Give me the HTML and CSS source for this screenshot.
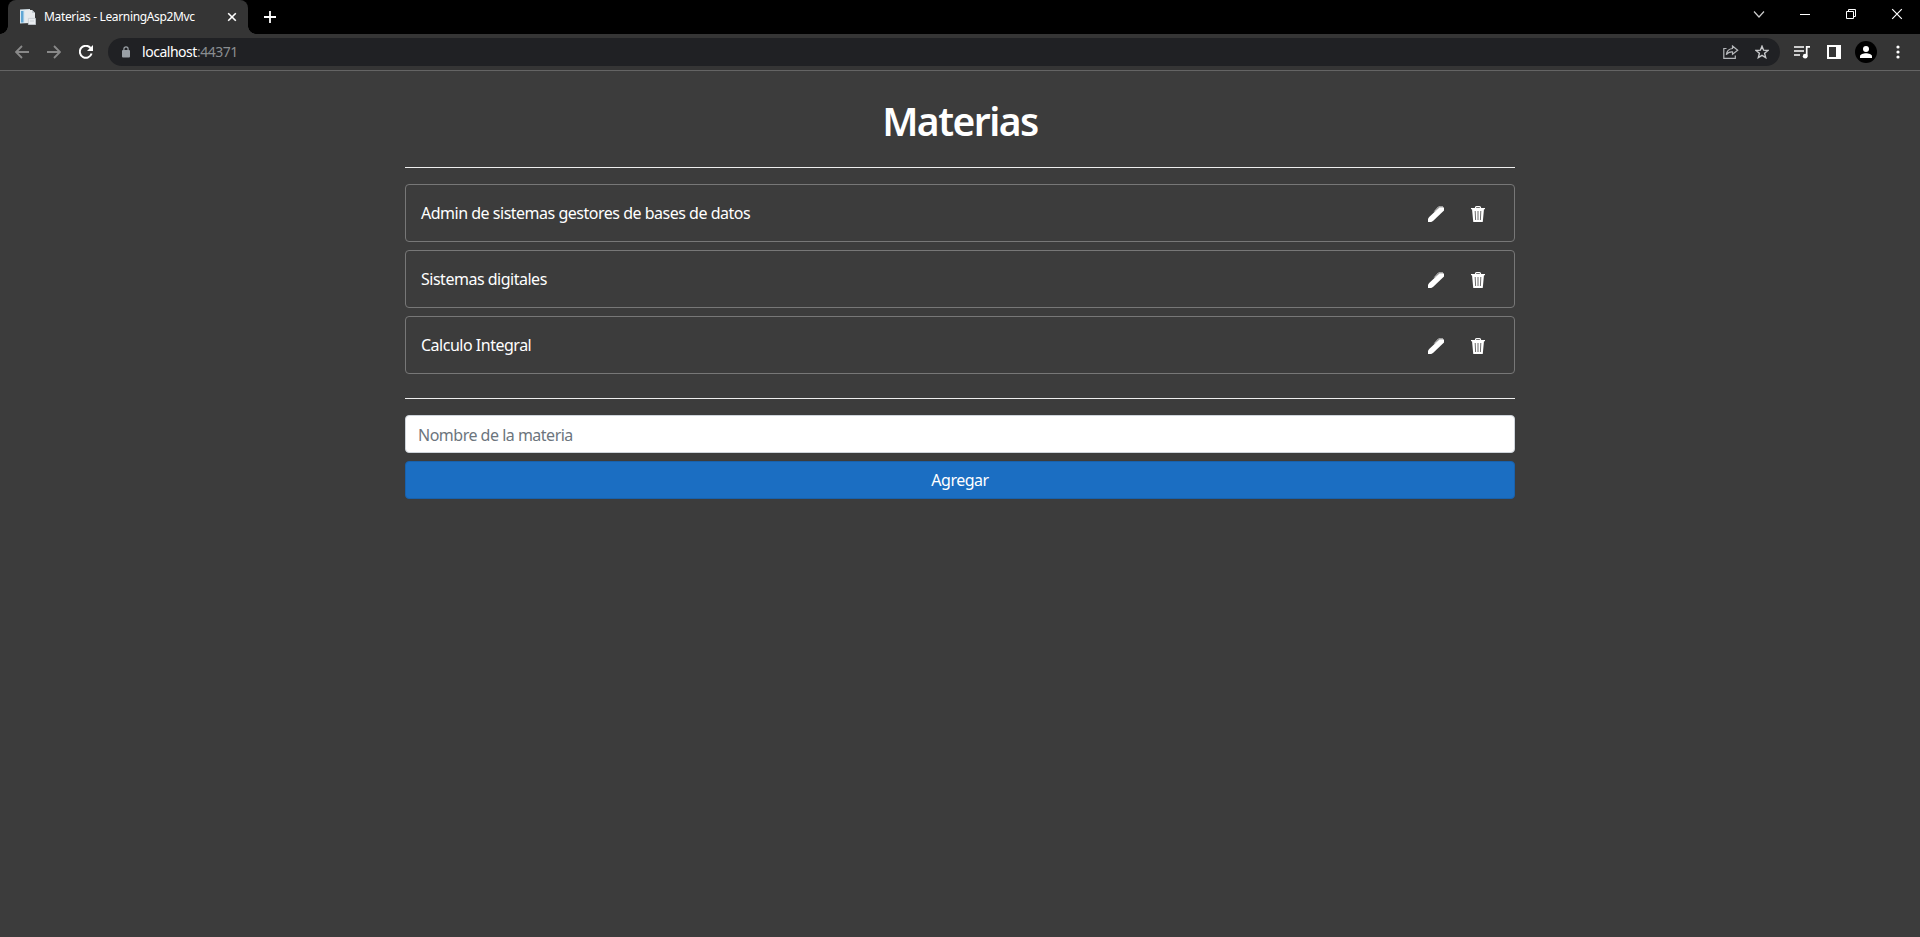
FILE: index.html
```html
<!DOCTYPE html>
<html lang="es">
<head>
<meta charset="utf-8">
<title>Materias - LearningAsp2Mvc</title>
<link rel="stylesheet" href="styles.css">
</head>
<body>
<svg width="0" height="0" class="defs">
  <symbol id="pencil" viewBox="0 0 16 16"><path fill="#fff" d="M0 16V12.700L1.200 11 11.500 1.300H15.500L16 2V4.500L5 15 3.200 16z"/><path d="M6.300 5.500 10.500.9H15" fill="none" stroke="#ddd" stroke-width="1"/></symbol>
  <symbol id="trash" viewBox="0 0 14 16"><path d="M4.500 2.500V1.500Q4.500.6 5.500.6H8.500Q9.500.6 9.500 1.500V2.500M0 2.700H14" fill="none" stroke="#fff" stroke-width="1.200"/><path fill="#fff" d="M1 3H13L11.800 15.500Q11.700 16 11.200 16H2.800Q2.300 16 2.200 15.500z"/><path d="M4.200 5 4.600 14M7 5V14M9.800 5 9.400 14" stroke="#6a6a6a" stroke-width="1"/></symbol>
</svg>
<header class="browser">
  <div class="tabstrip">
    <div class="tab">
      <svg class="favicon" width="16" height="16" viewBox="0 0 16 16"><path fill="#d8e6ef" d="M0 .5 10 0V14L0 14.500z"/><path fill="#5fa6d4" d="M1 2H3.500V13.500H1z"/><path fill="#e6eaed" d="M5 1H12L15 4V14H5z"/><path fill="#c1c9cf" d="M12 1V4H15z"/><path fill="#e9edf0" stroke="#c5cbd0" stroke-width=".8" d="M8.400 9.400H15.600V15.600H8.400z"/><path d="M10 12H14" stroke="#cbd0d5"/></svg>
      <span class="tab-title">Materias - LearningAsp2Mvc</span>
      <svg class="tab-close" width="10" height="10" viewBox="0 0 10 10"><path d="M1.200 1.200 8.800 8.800M8.800 1.200 1.200 8.800" stroke="#fff" stroke-width="1.600"/></svg>
    </div>
    <svg class="new-tab" width="12" height="12" viewBox="0 0 12 12"><path d="M6 0V12M0 6H12" stroke="#fff" stroke-width="1.800"/></svg>
    <div class="window-controls">
      <svg width="46" height="28" viewBox="0 0 46 28"><path d="M18 11.500 23 17 28 11.500" fill="none" stroke="#ccc" stroke-width="1.200"/></svg>
      <svg width="46" height="28" viewBox="0 0 46 28"><path d="M18 14.500H28" stroke="#fff"/></svg>
      <svg width="46" height="28" viewBox="0 0 46 28"><path d="M18.500 11.500H25.500V18.500H18.500zM20.500 11.500V9.500H27.500V16.500H25.500" fill="none" stroke="#fff"/></svg>
      <svg width="46" height="28" viewBox="0 0 46 28"><path d="M18.200 9.200 27.800 18.800M27.800 9.200 18.200 18.800" stroke="#fff" stroke-width="1.200"/></svg>
    </div>
  </div>
  <div class="toolbar">
    <div class="nav">
      <svg width="14" height="14" viewBox="0 0 14 14"><path d="M14 7H1.500M7 1 1 7 7 13" fill="none" stroke="#898989" stroke-width="1.800"/></svg>
      <svg width="14" height="14" viewBox="0 0 14 14"><path d="M0 7H12.500M7 1 13 7 7 13" fill="none" stroke="#898989" stroke-width="1.800"/></svg>
      <svg width="14" height="14" viewBox="0 0 14 14"><path d="M12.600 8.500A6 6 0 1 1 11.500 3" fill="none" stroke="#fff" stroke-width="2"/><path fill="#fff" d="M14 0V6H8z"/></svg>
    </div>
    <div class="address">
      <svg class="lock" width="8" height="12" viewBox="0 0 8 12"><rect y="4" width="8" height="7.500" rx="1" fill="#9aa0a6"/><path d="M1.900 4.500V3A2.100 2.100 0 0 1 6.100 3V4.500" fill="none" stroke="#9aa0a6" stroke-width="1.200"/></svg>
      <span class="url">localhost<span class="port">:44371</span></span>
      <svg class="share" width="16" height="14" viewBox="0 0 16 14"><path d="M3.500 3.500H.8V13.300H12.300V10.500" fill="none" stroke="#b5b7ba" stroke-width="1.200"/><path d="M9.500 1 14.700 5.200 9.500 9.300V6.900Q5.500 6.500 3.300 9.700 3.900 4.200 9.500 3.500z" fill="none" stroke="#b5b7ba" stroke-width="1.200"/></svg>
      <svg class="star" width="14" height="14" viewBox="0 0 14 14"><path d="M7 1.200 8.600 5.200 13 5.500 9.600 8.300 10.700 12.600 7 10.300 3.300 12.600 4.400 8.300 1 5.500 5.400 5.200z" fill="none" stroke="#c8c9cb" stroke-width="1.400"/></svg>
    </div>
    <svg class="media" width="16" height="14" viewBox="0 0 16 14"><path d="M0 2H10M0 6H10M0 10H6" stroke="#fff" stroke-width="1.600"/><path d="M12.700 11V1.800H16" fill="none" stroke="#fff" stroke-width="1.700"/><circle cx="11.200" cy="11.200" r="2.400" fill="#fff"/></svg>
    <svg class="panel" width="14" height="14" viewBox="0 0 14 14"><path fill="#fff" fill-rule="evenodd" d="M0 0H14V14H0zM2 2V12H9V2z"/></svg>
    <svg class="profile" width="22" height="22" viewBox="0 0 22 22"><circle cx="11" cy="11" r="11"/><circle cx="11" cy="8" r="3" fill="#fff"/><path fill="#fff" d="M5 17V15.200C5 13.200 8.500 12.200 11 12.200S17 13.200 17 15.200V17z"/></svg>
    <svg class="dots" width="4" height="14" viewBox="0 0 4 14" fill="#fff"><circle cx="2" cy="2" r="1.600"/><circle cx="2" cy="7" r="1.600"/><circle cx="2" cy="12" r="1.600"/></svg>
  </div>
</header>
<main class="page">
  <h1 class="title">Materias</h1>
  <hr class="rule">
  <ul class="subjects">
    <li class="subject"><span class="name">Admin de sistemas gestores de bases de datos</span><svg class="edit" width="16" height="16"><use href="#pencil"/></svg><svg class="delete" width="14" height="16"><use href="#trash"/></svg></li>
    <li class="subject"><span class="name">Sistemas digitales</span><svg class="edit" width="16" height="16"><use href="#pencil"/></svg><svg class="delete" width="14" height="16"><use href="#trash"/></svg></li>
    <li class="subject"><span class="name">Calculo Integral</span><svg class="edit" width="16" height="16"><use href="#pencil"/></svg><svg class="delete" width="14" height="16"><use href="#trash"/></svg></li>
  </ul>
  <hr class="rule">
  <form class="form">
    <input class="field" type="text" placeholder="Nombre de la materia">
    <button class="submit" type="button">Agregar</button>
  </form>
</main>
</body>
</html>
```
FILE: styles.css
```css
* { box-sizing: border-box; }
body { margin: 0; height: 937px; overflow: hidden; background: #3c3c3c; color: #fff; font: 16px/24px "Noto Sans", "Open Sans", sans-serif; }
svg { display: block; flex: none; }
.defs { position: absolute; }
.tabstrip { display: flex; height: 34px; background: #000; padding-left: 8px; }
.tab { display: flex; align-items: center; width: 240px; height: 34px; padding: 0 11px 0 12px; background: #353535; border-radius: 8px 8px 0 0; position: relative; }
.tab::before, .tab::after { content: ""; position: absolute; bottom: 0; width: 8px; height: 8px; }
.tab::before { left: -8px; background: radial-gradient(circle at 0 0, #000 7.500px, #353535 8px); }
.tab::after { right: -8px; background: radial-gradient(circle at 100% 0, #000 7.500px, #353535 8px); }
.tab-title { margin-left: 8px; font-size: 12px; letter-spacing: -0.350px; white-space: nowrap; }
.tab-close { margin-left: auto; }
.new-tab { margin: 11px 0 0 16px; }
.window-controls { display: flex; margin-left: auto; }
.toolbar { display: flex; align-items: center; height: 37px; padding: 0 20px 1px 15px; background: #353535; border-bottom: 1px solid #646464; }
.nav { display: flex; gap: 18px; width: 93px; }
.address { display: flex; align-items: center; flex: 1; height: 28px; padding: 0 11px 0 14px; border-radius: 14px; background: #202124; }
.url { margin-left: 12px; font-size: 14px; letter-spacing: -0.470px; }
.port { color: #8a8d91; }
.share { margin-left: auto; }
.star { margin-left: 16px; }
.media { margin-left: 14px; }
.panel { margin-left: 17px; }
.profile { margin-left: 14px; }
.dots { margin-left: 19px; }
.page { width: 1110px; margin: 0 auto; padding-top: 24px; }
.title { margin: 0; height: 48px; text-align: center; font-size: 39px; line-height: 51px; font-weight: 600; letter-spacing: -1.500px; }
.rule { height: 1px; margin: 24px 0 16px; border: 0; background: #eee; }
.subjects { display: grid; gap: 8px; margin: 0; padding: 0; list-style: none; }
.subject { display: flex; align-items: center; height: 58px; padding: 0 29px 0 15px; border: 1px solid #777; border-radius: 4px; }
.name { letter-spacing: -0.490px; }
.edit { margin: 2px 0 0 auto; }
.delete { margin: 2px 0 0 27px; }
.form { display: grid; gap: 8px; }
.field, .submit { width: 100%; height: 38px; border-radius: 4px; font: inherit; }
.field { padding: 8px 12px 6px; border: 1px solid #ced4da; background: #fff; letter-spacing: -0.500px; }
.field::placeholder { color: #6c757d; opacity: 1; }
.submit { padding: 0; border: 1px solid #1861ac; background: #1b6ec2; color: #fff; letter-spacing: -0.500px; }
```
